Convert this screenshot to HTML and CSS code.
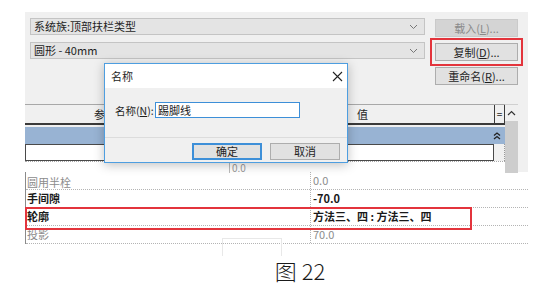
FILE: index.html
```html
<!DOCTYPE html>
<html lang="zh-CN">
<head>
    <meta charset="UTF-8">
    <title>类型属性 - 复制</title>
    <link rel="stylesheet" href="styles.css">
</head>
<body>
    <div class="shot">
        <!-- Type properties panel -->
        <div class="panel">
            <div class="top">
                <div class="combos">
                    <div class="combo">
                        <span>系统族:顶部扶栏类型</span>
                        <svg class="chev" width="9" height="6" viewBox="0 0 9 6"><polyline points="1,1 4.5,4.5 8,1" fill="none" stroke="#777" stroke-width="1"/></svg>
                    </div>
                    <div class="combo">
                        <span>圆形 - 40mm</span>
                        <svg class="chev" width="9" height="6" viewBox="0 0 9 6"><polyline points="1,1 4.5,4.5 8,1" fill="none" stroke="#777" stroke-width="1"/></svg>
                    </div>
                </div>
                <div class="actions">
                    <button class="btn" disabled>载入(<u>L</u>)...</button>
                    <button class="btn marked">复制(<u>D</u>)...</button>
                    <button class="btn">重命名(<u>R</u>)...</button>
                </div>
            </div>

            <div class="grid">
                <div class="table">
                    <div class="thead">
                        <span class="th-param">参数</span>
                        <span class="th-value">值</span>
                        <span class="th-eq">=</span>
                    </div>
                    <div class="group">
                        <svg width="8" height="8" viewBox="0 0 8 8"><polyline points="1,3.5 4,1 7,3.5" fill="none" stroke="#222" stroke-width="1.3"/><polyline points="1,7 4,4.5 7,7" fill="none" stroke="#222" stroke-width="1.3"/></svg>
                    </div>
                    <div class="edit-row">
                        <div class="edit-cell"></div>
                    </div>
                    <div class="peek"><span>0.0</span></div>
                </div>
                <div class="scroll">
                    <svg width="9" height="6" viewBox="0 0 9 6"><polyline points="1,5 4.5,1.5 8,5" fill="none" stroke="#333" stroke-width="1.2"/></svg>
                    <div class="thumb"></div>
                </div>
            </div>
        </div>

        <!-- Lower property rows -->
        <div class="props">
            <div class="prow muted clip"><span class="pname">圆用半栓</span><span class="pval">0.0</span></div>
            <div class="prow strong"><span class="pname">手间隙</span><span class="pval">-70.0</span></div>
            <div class="prow strong marked-row"><span class="pname">轮廓</span><span class="pval">方法三、四 : 方法三、四</span></div>
            <div class="prow muted"><span class="pname">投影</span><span class="pval">70.0</span></div>
            <div class="ghost"></div>
        </div>

        <div class="caption">图 22</div>

        <!-- Name dialog -->
        <div class="dialog">
            <div class="dlg-title">
                <span>名称</span>
                <svg width="11" height="11" viewBox="0 0 11 11"><path d="M1 1 L10 10 M10 1 L1 10" stroke="#222" stroke-width="1.1"/></svg>
            </div>
            <div class="dlg-body">
                <div class="field">
                    <label for="typeName">名称(<u>N</u>):</label>
                    <input id="typeName" type="text" value="踢脚线">
                </div>
                <div class="dlg-foot">
                    <button class="btn primary">确定</button>
                    <button class="btn">取消</button>
                </div>
            </div>
        </div>
    </div>
</body>
</html>
```

FILE: styles.css
```css
* {
    margin: 0;
    padding: 0;
    box-sizing: border-box;
}

body {
    background: #fff;
    font-family: "Noto Sans CJK SC", "Noto Sans", sans-serif;
    font-size: 11px;
    color: #1e1e1e;
}

.shot {
    position: relative;
    width: 545px;
    height: 289px;
    overflow: hidden;
}

/* Panel */
.panel {
    margin: 12px 0 0 25px;
    width: 503px;
    height: 160px;
    background: #f0f0f0;
    padding-top: 6px;
}

.top {
    display: flex;
    padding-left: 5px;
}

.combos {
    display: flex;
    flex-direction: column;
    gap: 7px;
    width: 395px;
}

.combo {
    height: 17px;
    display: flex;
    align-items: center;
    justify-content: space-between;
    padding: 0 6px 0 3px;
    background: #e4e4e4;
    border: 1px solid #c4c4c4;
    line-height: 15px;
}

.actions {
    display: flex;
    flex-direction: column;
    gap: 6px;
    margin-left: 10px;
    padding-top: 1px;
}

.btn {
    width: 83px;
    height: 18px;
    font-family: inherit;
    font-size: 11px;
    line-height: 16px;
    color: #1e1e1e;
    background: #e1e1e1;
    border: 1px solid #adadad;
    white-space: nowrap;
}

.btn u {
    text-decoration: underline;
}

.btn:disabled {
    color: #8a8a8a;
    background: #d4d4d4;
    border-color: #cacaca;
}

.btn.marked {
    outline: 2px solid #e3343c;
    outline-offset: 3px;
}

/* Grid behind the dialog */
.grid {
    display: flex;
    margin-top: 19px;
}

.table {
    width: 480px;
}

.thead {
    display: flex;
    height: 21px;
    border-top: 1px solid #a8a8a8;
    border-bottom: 2px solid #3a3a3a;
    line-height: 18px;
}

.th-param {
    width: 323px;
    padding-left: 69px;
}

.th-value {
    flex: 1;
    padding-left: 9px;
}

.th-eq {
    width: 11px;
    text-align: center;
    border-left: 1px solid #3a3a3a;
    border-right: 1px solid #3a3a3a;
    font-size: 10px;
}

.group {
    margin-top: 2px;
    height: 17px;
    background: #98b3d3;
    display: flex;
    align-items: center;
    justify-content: flex-end;
    padding-right: 4px;
}

.edit-row {
    display: flex;
    height: 17px;
    border-right: 1px dotted #999;
}

.edit-cell {
    width: 469px;
    background: #fff;
    border: 1px solid #4a4a4a;
}

.peek {
    height: 12px;
    background: #fff;
    border-top: 1px dotted #aaa;
    padding-left: 204px;
}

.peek span {
    display: block;
    border-left: 1px solid #bbb;
    padding-left: 2px;
    color: #999;
    font-size: 10px;
    line-height: 11px;
    height: 11px;
}

.scroll {
    width: 13px;
    display: flex;
    flex-direction: column;
    align-items: center;
    border-top: 1px solid #d0d0d0;
    padding-top: 5px;
}

.thumb {
    margin-top: 5px;
    width: 13px;
    flex: 1;
    background: #cdcdcd;
}

/* Lower rows */
.props {
    position: relative;
    margin-left: 25px;
    width: 503px;
    border-left: 1px solid #8a8a8a;
}

.prow {
    display: flex;
    height: 18px;
    line-height: 17px;
    border-bottom: 1px dotted #b4b4b4;
}

.pname {
    width: 284px;
    padding-left: 1px;
}

.pval {
    flex: 1;
    padding-left: 2px;
    border-left: 1px dotted #b4b4b4;
}

.prow.muted {
    color: #8c8c8c;
}

.prow.strong {
    font-weight: 700;
    color: #1a1a1a;
}

.prow.clip .pname {
    line-height: 14px;
    height: 17px;
    overflow: hidden;
    padding-top: 3px;
}

.marked-row {
    position: relative;
}

.marked-row::after {
    content: "";
    position: absolute;
    left: -1px;
    top: -1px;
    width: 443px;
    height: 19px;
    border: 2px solid #e3343c;
}

.ghost {
    position: absolute;
    left: 196px;
    top: 66px;
    width: 60px;
    height: 18px;
    border: 1px solid #e8e8e8;
    border-bottom: none;
}

.caption {
    margin-top: 14px;
    text-align: center;
    padding-left: 55px;
    font-size: 22px;
    font-weight: 300;
    line-height: 24px;
    color: #1a1a1a;
}

/* Dialog */
.dialog {
    position: absolute;
    left: 104px;
    top: 63px;
    width: 244px;
    height: 100px;
    background: #f0f0f0;
    border: 1px solid #4e9ee0;
    box-shadow: 0 2px 10px rgba(0, 0, 0, 0.25);
}

.dlg-title {
    height: 24px;
    background: #fff;
    display: flex;
    align-items: center;
    justify-content: space-between;
    padding: 0 4px 0 6px;
}

.dlg-body {
    padding-top: 14px;
}

.field {
    display: flex;
    align-items: center;
    height: 16px;
    padding-left: 10px;
}

.field label {
    width: 40px;
    white-space: nowrap;
    font-size: 10.5px;
}

.field input {
    width: 145px;
    height: 16px;
    font-family: inherit;
    font-size: 11px;
    padding-left: 2px;
    color: #1a1a1a;
    border: 1px solid #3d8fd8;
    background: #fff;
}

.dlg-foot {
    display: flex;
    justify-content: flex-end;
    gap: 8px;
    margin-top: 19px;
    padding: 5px 7px 0;
    border-top: 1px solid #dcdcdc;
}

.dlg-foot .btn {
    width: 70px;
    height: 17px;
    line-height: 13px;
}

.btn.primary {
    border: 2px solid #3d8fd8;
}
```
